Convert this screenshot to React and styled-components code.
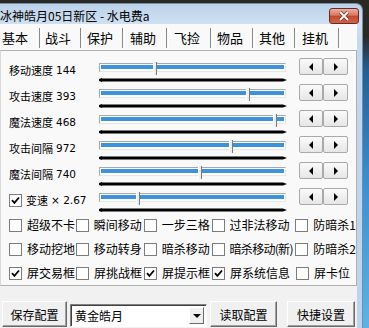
import styled, { createGlobalStyle } from 'styled-components'
import { Fragment } from 'react'

const GlobalStyle = createGlobalStyle`
    html, body {
        margin: 0;
        padding: 0;
    }
    body {
        background: #2c2822;
        font-family: "Noto Sans CJK SC", "Noto Sans", sans-serif;
        color: #000;
    }
`

const Screen = styled.div`
    width: 369px;
    height: 328px;
    overflow: hidden;
    box-sizing: border-box;
    padding-top: 3px;
    background: linear-gradient(to bottom, #2c2822 0px, #2c2822 36px, #245e93 70px, #3b8fcf 180px, #5db4e4 100%);
`

const Window = styled.div`
    width: 363px;
    height: 345px;
    box-sizing: border-box;
    border-top: 1px solid #6f8fb0;
    border-right: 1px solid #6f8fb0;
    border-top-right-radius: 7px;
    background: linear-gradient(to bottom, #bcd2ea 0px, #cfe0f2 20px, #c4d8ee 40px, #bcd3eb 100%);
    display: flex;
    flex-direction: column;
`

const TitleBar = styled.div`
    height: 20px;
    display: flex;
    justify-content: space-between;
    align-items: flex-start;
`

const Title = styled.div`
    font-size: 12px;
    line-height: 14px;
    padding-top: 5px;
    white-space: nowrap;
`

const CloseButton = styled.div`
    width: 30px;
    height: 16px;
    margin-top: 4px;
    margin-right: 3px;
    box-sizing: border-box;
    border: 1px solid #6b2a1f;
    border-radius: 3px;
    background: linear-gradient(to bottom, #eab0a2 0%, #d87660 45%, #c4472f 50%, #d0644a 100%);
    display: flex;
    align-items: center;
    justify-content: center;
`

const Client = styled.div`
    width: 357px;
    flex: 1;
    background: #f1f1f1;
    display: flex;
    flex-direction: column;
`

const TabBar = styled.div`
    height: 26px;
    display: flex;
    align-items: center;
    background: #f9f9f9;
`

const Tab = styled.div`
    width: ${p => p.$w}px;
    height: 26px;
    box-sizing: border-box;
    padding-left: ${p => p.$pl}px;
    display: flex;
    align-items: center;
    font-size: 13px;
    line-height: 16px;
    padding-top: 1px;
`

const TabSep = styled.div`
    width: 1px;
    height: 20px;
    border-left: 1px solid #8a8a8a;
    border-right: 1px solid #ffffff;
    margin-top: 2px;
`

const Panel = styled.div`
    height: 236px;
    box-sizing: border-box;
    border: 1px solid #b0b0b0;
    border-left-color: #d8d8d8;
    background: #f9f9f9;
    padding-top: 6px;
`

const SliderRow = styled.div`
    height: 26px;
    display: flex;
    align-items: flex-start;
`

const LabelCell = styled.div`
    width: 98px;
    box-sizing: border-box;
    padding-left: 8px;
    padding-top: 6px;
    font-size: 11px;
    line-height: 14px;
    white-space: nowrap;
    display: flex;
    align-items: center;
`

const Num = styled.span`
    margin-left: 3px;
    font-family: "DejaVu Sans", sans-serif;
    font-size: 10.5px;
`

const TrackArea = styled.div`
    width: 187px;
    padding-top: 6px;
`

const Track = styled.div`
    position: relative;
    width: 187px;
    height: 9px;
    box-sizing: border-box;
    border: 1px solid #a8a8a8;
    border-right-color: #e6e6e6;
    border-bottom-color: #e6e6e6;
    background: #ffffff;
    padding: 1px 1px;
`

const Fill = styled.div`
    height: 4px;
    background: #3b93de;
`

const Thumb = styled.div`
    position: absolute;
    top: -2px;
    width: 2px;
    height: 13px;
    background: #eeeeee;
    border-left: 1px solid #ffffff;
    border-right: 1px solid #7a7a7a;
    margin-left: -2px;
`

const TickLine = styled.svg`
    display: block;
    margin-top: 6px;
`

const StepButtons = styled.div`
    display: flex;
    margin-left: 13px;
    margin-top: 1px;
`

const StepButton = styled.div`
    width: ${p => p.$w}px;
    height: 17px;
    box-sizing: border-box;
    border: 1px solid #a9a9a9;
    border-radius: 2px;
    background: linear-gradient(to bottom, #fafafa, #e6e6e6);
    display: flex;
    align-items: center;
    justify-content: center;
`

const Arrow = styled.span`
    width: 0;
    height: 0;
    border-top: 4px solid transparent;
    border-bottom: 4px solid transparent;
    ${p => p.$dir === 'left' ? 'border-right: 4px solid #000;' : 'border-left: 4px solid #000;'}
`

const CheckRow = styled.div`
    height: 24px;
    display: flex;
    align-items: center;
    padding-left: 8px;
`

const CheckItem = styled.div`
    width: ${p => p.$w ? p.$w + 'px' : 'auto'};
    display: flex;
    align-items: center;
    font-size: 12px;
    line-height: 14px;
    white-space: nowrap;
    letter-spacing: ${p => p.$tight ? '-0.7px' : '0'};
`

const Box = styled.span`
    width: 13px;
    height: 13px;
    box-sizing: border-box;
    border: 1px solid #7c7c7c;
    background: #ffffff;
    display: flex;
    align-items: center;
    justify-content: center;
    margin-right: ${p => p.$gap ?? 5}px;
    flex-shrink: 0;
`

const BottomRow = styled.div`
    display: flex;
    align-items: flex-start;
    padding-left: 2px;
    margin-top: 15px;
`

const Button = styled.div`
    width: ${p => p.$w}px;
    height: 26px;
    margin-right: ${p => p.$mr}px;
    box-sizing: border-box;
    border: 1px solid;
    border-color: #ffffff #6a6a6a #6a6a6a #ffffff;
    box-shadow: inset -1px -1px 0 #a0a0a0;
    background: #f0f0f0;
    font-size: 12px;
    display: flex;
    align-items: center;
    justify-content: center;
`

const Combo = styled.div`
    width: 137px;
    height: 23px;
    margin-top: 3px;
    margin-right: 3px;
    box-sizing: border-box;
    border: 1px solid;
    border-color: #808080 #ffffff #ffffff #808080;
    box-shadow: inset 1px 1px 0 #404040;
    background: #ffffff;
    display: flex;
    align-items: center;
    justify-content: space-between;
    font-size: 12px;
    padding-left: 4px;
`

const DropButton = styled.div`
    width: 15px;
    height: 17px;
    margin-right: 2px;
    box-sizing: border-box;
    border: 1px solid;
    border-color: #ffffff #6a6a6a #6a6a6a #ffffff;
    background: #f0f0f0;
    display: flex;
    align-items: center;
    justify-content: center;
`

const DownArrow = styled.span`
    width: 0;
    height: 0;
    border-left: 4px solid transparent;
    border-right: 4px solid transparent;
    border-top: 4px solid #000;
`

const tabs = [
    { name: '基本', w: 39, pl: 2 },
    { name: '战斗', w: 38, pl: 3 },
    { name: '保护', w: 39, pl: 4 },
    { name: '辅助', w: 41, pl: 5 },
    { name: '飞捡', w: 41, pl: 5 },
    { name: '物品', w: 39, pl: 4 },
    { name: '其他', w: 39, pl: 4 },
    { name: '挂机', w: 41, pl: 5 },
]

const sliders = [
    { label: '移动速度', num: '144', pos: 0.299 },
    { label: '攻击速度', num: '393', pos: 0.799 },
    { label: '魔法速度', num: '468', pos: 0.946 },
    { label: '攻击间隔', num: '972', pos: 0.707 },
    { label: '魔法间隔', num: '740', pos: 0.543 },
]

const colWidths = [67, 68, 68, 84, null]

const checkRows = [
    [['超级不卡', false], ['瞬间移动', false], ['一步三格', false], ['过非法移动', false], ['防暗杀1', false]],
    [['移动挖地', false], ['移动转身', false], ['暗杀移动', false], ['暗杀移动(新)', false], ['防暗杀2', false]],
    [['屏交易框', true], ['屏挑战框', false], ['屏提示框', true], ['屏系统信息', true], ['屏卡位', false]],
]

function CheckBox({ checked, gap }) {
    return (
        <Box $gap={gap}>
            {checked && (
                <svg width="9" height="9" viewBox="0 0 9 9">
                    <path d="M1 4.2 L3.4 6.8 L8 1.5" stroke="#000" strokeWidth="1.8" fill="none" />
                </svg>
            )}
        </Box>
    )
}

function Slider({ pos }) {
    return (
        <TrackArea>
            <Track>
                <Fill />
                <Thumb style={{ left: `${pos * 100}%` }} />
            </Track>
            <TickLine width="188" height="4" viewBox="0 0 188 4">
                <path d="M0 1 L3 0 V0.6 H184 L188 2 L184 3.6 H3 V4 L0 3 Z" fill="#000" />
            </TickLine>
        </TrackArea>
    )
}

function Steppers() {
    return (
        <StepButtons>
            <StepButton $w={24}><Arrow $dir="left" /></StepButton>
            <StepButton $w={25}><Arrow $dir="right" /></StepButton>
        </StepButtons>
    )
}

function App() {
    return (
        <Screen>
            <GlobalStyle />
            <Window>
                <TitleBar>
                    <Title>冰神皓月05日新区 - 水电费a</Title>
                    <CloseButton>
                        <svg width="12" height="10" viewBox="0 0 12 10">
                            <path d="M2 1 L10 9 M10 1 L2 9" stroke="#7a2d20" strokeWidth="3.4" />
                            <path d="M2 1 L10 9 M10 1 L2 9" stroke="#ffffff" strokeWidth="2" />
                        </svg>
                    </CloseButton>
                </TitleBar>
                <Client>
                    <TabBar>
                        {tabs.map(t => (
                            <Fragment key={t.name}>
                                <Tab $w={t.w} $pl={t.pl}>{t.name}</Tab>
                                <TabSep />
                            </Fragment>
                        ))}
                    </TabBar>
                    <Panel>
                        {sliders.map(s => (
                            <SliderRow key={s.label}>
                                <LabelCell>{s.label}<Num>{s.num}</Num></LabelCell>
                                <Slider pos={s.pos} />
                                <Steppers />
                            </SliderRow>
                        ))}
                        <SliderRow>
                            <LabelCell>
                                <CheckBox checked gap={4} />
                                变速<Num>× 2.67</Num>
                            </LabelCell>
                            <Slider pos={0.207} />
                            <Steppers />
                        </SliderRow>
                        {checkRows.map((row, i) => (
                            <CheckRow key={i}>
                                {row.map(([label, checked], j) => (
                                    <CheckItem key={label + j} $w={colWidths[j]} $tight={label.length > 5}>
                                        <CheckBox checked={checked} />
                                        {label}
                                    </CheckItem>
                                ))}
                            </CheckRow>
                        ))}
                    </Panel>
                    <BottomRow>
                        <Button $w={65} $mr={3}>保存配置</Button>
                        <Combo>
                            黄金皓月
                            <DropButton><DownArrow /></DropButton>
                        </Combo>
                        <Button $w={67} $mr={10}>读取配置</Button>
                        <Button $w={68} $mr={0}>快捷设置</Button>
                    </BottomRow>
                </Client>
            </Window>
        </Screen>
    )
}

export default App
